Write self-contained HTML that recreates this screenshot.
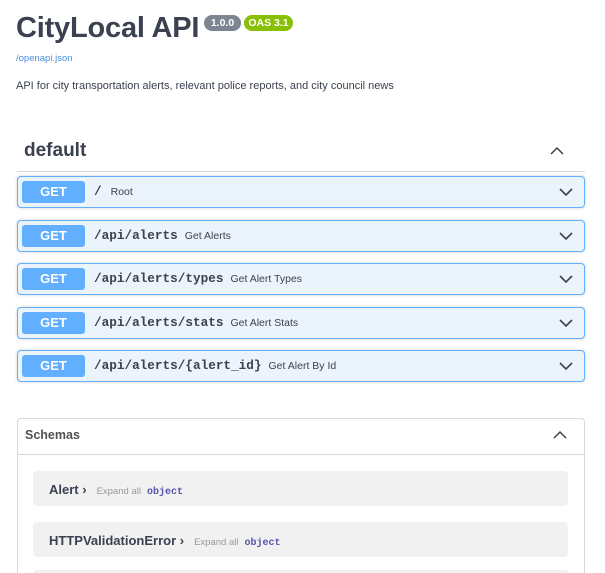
<!DOCTYPE html>
<html><head><meta charset="utf-8"><style>
html,body{margin:0;width:605px;height:573px;overflow:hidden}
body{background:#fff;font-family:"Liberation Sans",sans-serif;color:#3b4151;position:relative}
.a{position:absolute}
h1{position:absolute;left:16px;top:12px;margin:0;font-size:29px;font-weight:bold;color:#3b4151;letter-spacing:-0.2px}
.badge{position:absolute;top:15px;height:16px;border-radius:8px;color:#fff;font-size:10.5px;font-weight:bold;line-height:16px;text-align:center}
.op{position:absolute;left:17px;width:566px;height:30px;border:1px solid #61affe;background:#ebf3fb;border-radius:4px;box-shadow:0 0 3px rgba(0,0,0,.19)}
.get{position:absolute;left:4px;top:4px;width:63px;height:22px;background:#61affe;border-radius:3px;color:#fff;font-weight:bold;font-size:13px;line-height:22px;text-align:center}
.path{position:absolute;left:76px;top:7px;font-family:"Liberation Mono",monospace;font-weight:bold;font-size:12.7px;color:#3b4151}
.sum{font-family:"Liberation Sans",sans-serif;font-weight:normal;font-size:10.5px;margin-left:7px}
.chev{position:absolute;right:10px;top:8px}
.model{position:absolute;left:33px;width:535px;height:35px;background:#f1f1f1;border-radius:4px}
.mn{position:absolute;left:16px;top:11px;font-size:13px;font-weight:bold;color:#3b4151}
.ex{color:#999;font-size:9.5px;font-weight:normal;margin-left:10px}
.obj{font-family:"Liberation Mono",monospace;color:#55a;font-size:10px;font-weight:bold;margin-left:6px}
</style></head><body>
<h1>CityLocal API</h1>
<div class="badge" style="left:204px;width:37px;background:#7d8492">1.0.0</div>
<div class="badge" style="left:244px;width:49px;background:#89bf04">OAS 3.1</div>
<div class="a" style="left:16px;top:53px;font-size:9.5px;color:#4990e2">/openapi.json</div>
<div class="a" style="left:16px;top:80px;font-size:11px;color:#3b4151">API for city transportation alerts, relevant police reports, and city council news</div>
<div class="a" style="left:24px;top:140px;font-size:19px;font-weight:bold">default</div>
<svg class="a" style="left:549px;top:145px" width="16" height="12" viewBox="0 0 16 12"><path d="M2 9 L8 3 L14 9" fill="none" stroke="#3b4151" stroke-width="1.5"/></svg>
<div class="a" style="left:17px;top:171px;width:568px;height:1px;background:#d6d8dc"></div>

<div class="op" style="top:176px"><div class="get">GET</div><div class="path">/<span class="sum" style="margin-left:9px">Root</span></div><svg class="chev" width="16" height="14" viewBox="0 0 16 14"><path d="M2 4 L8 10 L14 4" fill="none" stroke="#3b4151" stroke-width="1.6"/></svg></div>
<div class="op" style="top:220px"><div class="get">GET</div><div class="path">/api/alerts<span class="sum">Get Alerts</span></div><svg class="chev" width="16" height="14" viewBox="0 0 16 14"><path d="M2 4 L8 10 L14 4" fill="none" stroke="#3b4151" stroke-width="1.6"/></svg></div>
<div class="op" style="top:263px"><div class="get">GET</div><div class="path">/api/alerts/types<span class="sum">Get Alert Types</span></div><svg class="chev" width="16" height="14" viewBox="0 0 16 14"><path d="M2 4 L8 10 L14 4" fill="none" stroke="#3b4151" stroke-width="1.6"/></svg></div>
<div class="op" style="top:307px"><div class="get">GET</div><div class="path">/api/alerts/stats<span class="sum">Get Alert Stats</span></div><svg class="chev" width="16" height="14" viewBox="0 0 16 14"><path d="M2 4 L8 10 L14 4" fill="none" stroke="#3b4151" stroke-width="1.6"/></svg></div>
<div class="op" style="top:350px"><div class="get">GET</div><div class="path">/api/alerts/{alert_id}<span class="sum">Get Alert By Id</span></div><svg class="chev" width="16" height="14" viewBox="0 0 16 14"><path d="M2 4 L8 10 L14 4" fill="none" stroke="#3b4151" stroke-width="1.6"/></svg></div>

<div class="a" style="left:17px;top:418px;width:566px;height:160px;border:1px solid #d6d8dc;border-bottom:none;border-radius:4px 4px 0 0"></div>
<div class="a" style="left:18px;top:454px;width:566px;height:1px;background:#d6d8dc"></div>
<div class="a" style="left:25px;top:428px;font-size:12.5px;font-weight:bold;color:#505050">Schemas</div>
<svg class="a" style="left:552px;top:429px" width="16" height="12" viewBox="0 0 16 12"><path d="M2 9 L8 3 L14 9" fill="none" stroke="#3b4151" stroke-width="1.5"/></svg>
<div class="model" style="top:471px"><div class="mn">Alert ›<span class="ex">Expand all</span><span class="obj">object</span></div></div>
<div class="model" style="top:522px"><div class="mn">HTTPValidationError ›<span class="ex">Expand all</span><span class="obj">object</span></div></div>
<div class="model" style="top:570px;height:3px;border-radius:4px 4px 0 0"></div>
</body></html>
